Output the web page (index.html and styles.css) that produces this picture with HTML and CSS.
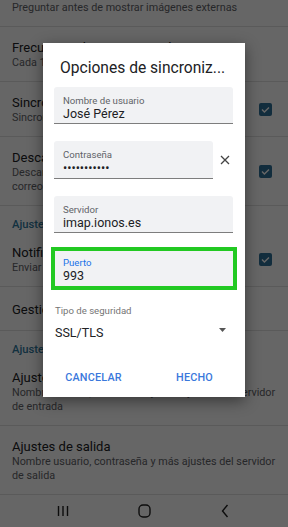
FILE: index.html
```html
<!DOCTYPE html>
<html lang="es">
<head>
<meta charset="utf-8">
<title>Opciones de sincronización</title>
<link rel="stylesheet" href="styles.css">
</head>
<body>
<div class="screen">
  <main class="list">
    <div class="row first">
      <div class="text"><div class="sub">Preguntar antes de mostrar imágenes externas</div></div>
    </div>
    <div class="row">
      <div class="text">
        <div class="title">Frecuencia de sincronización</div>
        <div class="sub">Cada 15 minutos</div>
      </div>
    </div>
    <div class="row">
      <div class="text">
        <div class="title">Sincronizar correo</div>
        <div class="sub">Sincronizar el correo de esta cuenta</div>
      </div>
      <span class="check"><svg viewBox="0 0 13 13" width="13" height="13"><path d="M3 6.6l2.4 2.4L10 4.4" fill="none" stroke="#fff" stroke-width="1.4"/></svg></span>
    </div>
    <div class="row">
      <div class="text">
        <div class="title">Descargar archivos adjuntos</div>
        <div class="sub">Descargar automáticamente adjuntos de los correos recientes mediante Wi-Fi</div>
      </div>
      <span class="check"><svg viewBox="0 0 13 13" width="13" height="13"><path d="M3 6.6l2.4 2.4L10 4.4" fill="none" stroke="#fff" stroke-width="1.4"/></svg></span>
    </div>
    <div class="cat">Ajustes de notificación</div>
    <div class="row">
      <div class="text">
        <div class="title">Notificaciones de correo</div>
        <div class="sub">Enviar notificación al recibir correo</div>
      </div>
      <span class="check"><svg viewBox="0 0 13 13" width="13" height="13"><path d="M3 6.6l2.4 2.4L10 4.4" fill="none" stroke="#fff" stroke-width="1.4"/></svg></span>
    </div>
    <div class="row single">
      <div class="text"><div class="title">Gestionar carpetas</div></div>
    </div>
    <div class="cat">Ajustes del servidor</div>
    <div class="row">
      <div class="text">
        <div class="title">Ajustes de entrada</div>
        <div class="sub">Nombre usuario, contraseña y más ajustes del servidor de entrada</div>
      </div>
    </div>
    <div class="row">
      <div class="text">
        <div class="title">Ajustes de salida</div>
        <div class="sub">Nombre usuario, contraseña y más ajustes del servidor de salida</div>
      </div>
    </div>
  </main>
  <nav class="navbar">
    <span class="nav-btn"><svg viewBox="0 0 12 12" width="12" height="12"><path d="M1.5 1v10M6 1v10M10.5 1v10" stroke="#202020" stroke-width="1.4" fill="none"/></svg></span>
    <span class="nav-btn"><svg viewBox="0 0 13 14" width="13" height="14"><rect x="1" y="1" width="11" height="12" rx="4" fill="none" stroke="#202020" stroke-width="1.4"/></svg></span>
    <span class="nav-btn"><svg viewBox="0 0 8 14" width="8" height="14"><path d="M6.5 1L1.5 7l5 6" fill="none" stroke="#202020" stroke-width="1.4"/></svg></span>
  </nav>

  <div class="scrim"></div>

  <div class="dialog">
    <h1 class="dlg-title">Opciones de sincroniz...</h1>
    <div class="field">
      <div class="f-label">Nombre de usuario</div>
      <div class="f-value">José Pérez</div>
    </div>
    <div class="field-row">
      <div class="field pw">
        <div class="f-label">Contraseña</div>
        <div class="f-value dots">•••••••••••</div>
      </div>
      <span class="clear"><svg viewBox="0 0 10 10" width="10" height="10"><path d="M1 1l8 8M9 1L1 9" stroke="#444" stroke-width="1.3" fill="none"/></svg></span>
    </div>
    <div class="field">
      <div class="f-label">Servidor</div>
      <div class="f-value">imap.ionos.es</div>
    </div>
    <div class="highlight">
      <div class="field focused">
        <div class="f-label">Puerto</div>
        <div class="f-value">993</div>
      </div>
    </div>
    <div class="select">
      <div class="s-label">Tipo de seguridad</div>
      <div class="s-row">
        <span class="s-value">SSL/TLS</span>
        <svg class="caret" viewBox="0 0 7 4" width="7" height="4"><path d="M0 0h7L3.5 4z" fill="#555"/></svg>
      </div>
    </div>
    <div class="actions">
      <span class="btn">CANCELAR</span>
      <span class="btn">HECHO</span>
    </div>
  </div>
</div>
</body>
</html>
```

FILE: styles.css
```css
* { box-sizing: border-box; }
html, body { margin: 0; padding: 0; }
body {
  font-family: Roboto, "Noto Sans", "Liberation Sans", sans-serif;
  background: #fff;
}
.screen {
  position: relative;
  width: 288px;
  height: 527px;
  overflow: hidden;
  background: #fff;
  display: flex;
  flex-direction: column;
}
.list { flex: 1; overflow: hidden; }
.row {
  display: flex;
  align-items: center;
  padding: 12px 12px 11px;
  border-bottom: 1px solid #e2e2e2;
}
.row.first { padding-top: 1px; }
.row.single { padding-top: 14px; padding-bottom: 12px; }
.text { flex: 1; min-width: 0; }
.title {
  font-size: 13px;
  line-height: 17px;
  color: #202124;
}
.sub {
  font-size: 10.8px;
  line-height: 14px;
  color: #5f6368;
}
.check {
  width: 13px;
  height: 13px;
  border-radius: 2px;
  background: #2f7099;
  margin: 0 4px 0 10px;
  display: flex;
  flex: none;
}
.cat {
  padding: 12px 12px 0;
  font-size: 11.2px;
  line-height: 14px;
  font-weight: 500;
  color: #2f7a9f;
}
.navbar {
  flex: none;
  height: 32px;
  display: grid;
  grid-template-columns: repeat(3, 81px);
  justify-content: center;
  align-items: center;
  background: #fff;
}
.nav-btn { display: flex; justify-content: center; align-items: center; }

.scrim {
  position: absolute;
  inset: 0;
  background: rgba(0, 0, 0, 0.6);
}
.dialog {
  position: absolute;
  left: 43px;
  top: 43px;
  width: 202px;
  height: 354px;
  background: #fff;
  padding: 14px 12px 1px 11px;
  box-shadow: 0 4px 14px rgba(0, 0, 0, 0.45);
}
.dlg-title {
  margin: 0 0 8px;
  padding-left: 6px;
  font-size: 15.6px;
  line-height: 22px;
  font-weight: 400;
  color: #202124;
  white-space: nowrap;
}
.field {
  background: #f1f2f4;
  padding: 8px 8px 2px 9px;
  border-bottom: 1px solid #7d7d7d;
  border-radius: 3px 3px 0 0;
}
.f-label {
  font-size: 9.6px;
  line-height: 11px;
  color: #5f6368;
}
.f-value {
  font-size: 12.5px;
  line-height: 15px;
  color: #202124;
}
.field-row {
  display: flex;
  align-items: center;
  margin: 17px 0;
}
.field.pw { flex: 1; padding-bottom: 3px; }
.clear {
  width: 24px;
  margin-right: -4px;
  display: flex;
  justify-content: center;
}
.highlight {
  margin: 14px -4px 0 -3px;
  border: 4px solid #22c922;
}
.field.focused {
  border-bottom: 0;
  border-radius: 0;
  padding: 6px 8px 3px 8px;
}
.field.focused .f-label { color: #1a73e8; }
.select { margin-top: 15px; padding-left: 1px; }
.s-label {
  font-size: 9.6px;
  line-height: 11px;
  color: #757575;
}
.s-row {
  margin-top: 9px;
  display: flex;
  justify-content: space-between;
  align-items: center;
  padding-right: 7px;
}
.s-value {
  font-size: 12.5px;
  line-height: 16px;
  color: #202124;
}
.caret { display: block; margin-top: -6px; }
.actions {
  margin-top: 19px;
  margin-left: -11px;
  margin-right: -12px;
  display: grid;
  grid-template-columns: 1fr 1fr;
}
.btn {
  text-align: center;
  padding: 11px 0;
  font-size: 10.8px;
  line-height: 14px;
  font-weight: 500;
  letter-spacing: 0.2px;
  color: #3a78dc;
}
```
